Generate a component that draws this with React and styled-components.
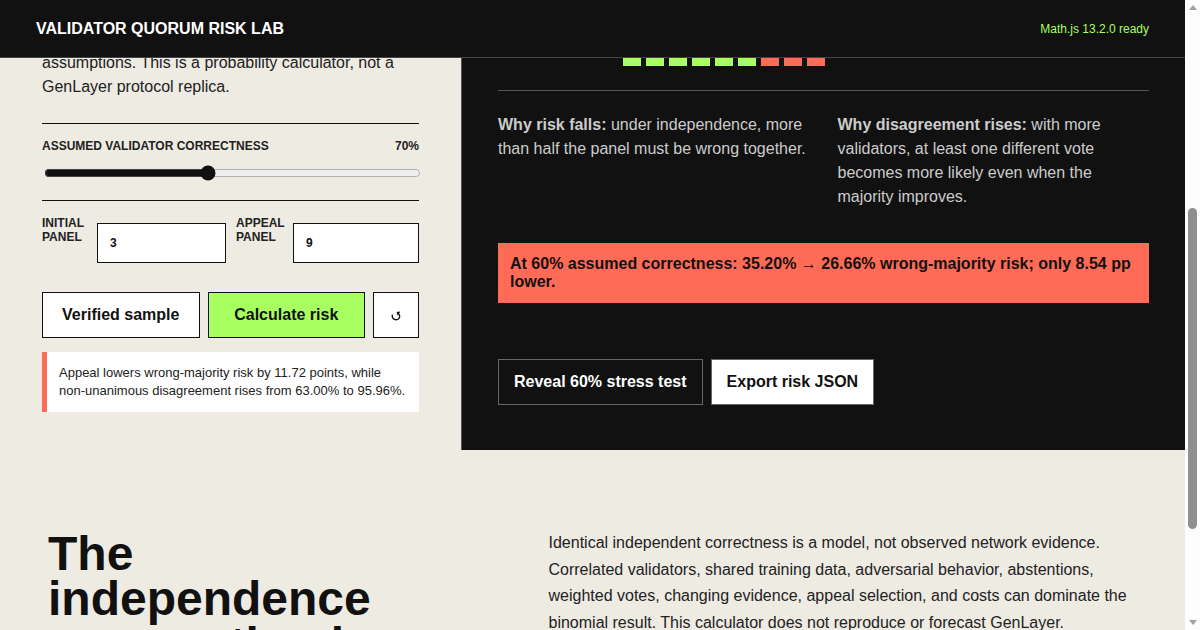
import React, { useLayoutEffect, useRef } from 'react'
import styled, { createGlobalStyle } from 'styled-components'

const GlobalStyle = createGlobalStyle`
  * { box-sizing: border-box; }
  body {
    margin: 0;
    background: #eeebe3;
    color: #111;
    font-family: "Liberation Sans", Arial, sans-serif;
    font-size: 16px;
  }
`

const votes = [1, 1, 1, 1, 1, 1, 0, 0, 0]

const App = () => {
  const scroller = useRef(null)

  // the top of the page slides a few pixels under the header
  useLayoutEffect(() => {
    scroller.current.scrollTop = 8
  }, [])

  return (
    <Frame>
      <GlobalStyle />
      <Page>
        <Header>
          <Brand>VALIDATOR QUORUM RISK LAB</Brand>
          <Status>Math.js 13.2.0 ready</Status>
        </Header>

        <Scroller ref={scroller}>
          <Lab>
            <Controls>
              <Lede>
                assumptions. This is a probability calculator, not a GenLayer protocol replica.
              </Lede>

              <SliderGroup>
                <SliderHead>
                  <span>ASSUMED VALIDATOR CORRECTNESS</span>
                  <span>70%</span>
                </SliderHead>
                <Slider type="range" min="51" max="95" defaultValue="70" />
              </SliderGroup>

              <Fields>
                <Field>
                  <FieldLabel $width={43}>INITIAL PANEL</FieldLabel>
                  <NumberInput type="number" defaultValue="3" />
                </Field>
                <Field>
                  <FieldLabel $width={45}>APPEAL PANEL</FieldLabel>
                  <NumberInput type="number" defaultValue="9" />
                </Field>
              </Fields>

              <Actions>
                <Button>Verified sample</Button>
                <Button $accent>Calculate risk</Button>
                <ResetButton aria-label="Reset">
                  <svg width="10" height="10" viewBox="0 0 10 10" fill="none" stroke="#111" strokeWidth="1.4">
                    <path d="M1.4 3.6C0.6 6.8 2.6 8.8 5 8.8C7.4 8.8 9 7 8.6 4.6C8.4 3.6 7.9 2.9 7.2 2.3" />
                    <path d="M8.8 1.2L6.4 1.6L7 4.2" strokeWidth="1.2" />
                  </svg>
                </ResetButton>
              </Actions>

              <Note>
                Appeal lowers wrong-majority risk by 11.72 points, while non-unanimous disagreement rises
                from 63.00% to 95.96%.
              </Note>
            </Controls>

            <Results>
              <Votes>
                {votes.map((ok, i) => (
                  <Vote key={i} $ok={ok} />
                ))}
              </Votes>

              <Explain>
                <p>
                  <strong>Why risk falls:</strong> under independence, more than half the panel must be wrong together.
                </p>
                <p>
                  <strong>Why disagreement rises:</strong> with more validators, at least one different vote becomes more
                  likely even when the majority improves.
                </p>
              </Explain>

              <Alert>At 60% assumed correctness: 35.20% → 26.66% wrong-majority risk; only 8.54 pp lower.</Alert>

              <ResultActions>
                <DarkButton>Reveal 60% stress test</DarkButton>
                <LightButton>Export risk JSON</LightButton>
              </ResultActions>
            </Results>
          </Lab>

          <Caveat>
            <CaveatTitle>The independence assumption is the limit</CaveatTitle>
            <CaveatText>
              Identical independent correctness is a model, not observed network evidence. Correlated validators,
              shared training data, adversarial behavior, abstentions, weighted votes, changing evidence, appeal
              selection, and costs can dominate the binomial result. This calculator does not reproduce or forecast
              GenLayer.
            </CaveatText>
          </Caveat>
        </Scroller>
      </Page>

      <ScrollTrack>
        <ArrowUp />
        <Thumb />
        <ArrowDown />
      </ScrollTrack>
    </Frame>
  )
}

const Frame = styled.div`
  display: flex;
  height: 100vh;
  overflow: hidden;
`

const Page = styled.div`
  flex: 1;
  min-width: 0;
  display: flex;
  flex-direction: column;
`

const Header = styled.header`
  flex: none;
  height: 58px;
  padding: 0 36px;
  display: flex;
  align-items: center;
  justify-content: space-between;
  background: #111;
  border-bottom: 1px solid #444;
`

const Brand = styled.div`
  color: #fff;
  font-size: 16px;
  font-weight: 700;
`

const Status = styled.div`
  color: #a8ff60;
  font-size: 12px;
`

const Scroller = styled.div`
  flex: 1;
  min-height: 0;
  overflow: hidden;
`

const ScrollTrack = styled.aside`
  flex: none;
  width: 15px;
  display: flex;
  flex-direction: column;
  align-items: center;
  background: #fdfdfd;
`

const ArrowUp = styled.span`
  margin-top: 5px;
  border-left: 4.5px solid transparent;
  border-right: 4.5px solid transparent;
  border-bottom: 5px solid #a0a0a0;
`

const Thumb = styled.span`
  width: 9px;
  height: 321px;
  margin-top: 198px;
  border-radius: 5px;
  background: #8f8f8f;
`

const ArrowDown = styled.span`
  margin-top: auto;
  margin-bottom: 5px;
  border-left: 4.5px solid transparent;
  border-right: 4.5px solid transparent;
  border-top: 5px solid #a0a0a0;
`

const Lab = styled.main`
  display: grid;
  grid-template-columns: 461px 1fr;
  height: 400px;
`

const Controls = styled.section`
  padding: 0 42px;
`

const Lede = styled.p`
  margin: 0 0 24px;
  padding-top: 1px;
  line-height: 24px;
  color: #222;
`

const SliderGroup = styled.div`
  border-top: 1px solid #111;
  border-bottom: 1px solid #111;
  padding: 15px 0 17px;
`

const SliderHead = styled.div`
  display: flex;
  justify-content: space-between;
  font-size: 12px;
  font-weight: 700;
  line-height: 14px;
  color: #222;
  margin-bottom: 12px;
`

const Slider = styled.input`
  display: block;
  width: 100%;
  height: 16px;
  margin: 2px;
  accent-color: #111;
`

const Fields = styled.div`
  display: grid;
  grid-template-columns: 184px 183px;
  gap: 10px;
  padding-top: 15px;
`

const Field = styled.label`
  display: grid;
  grid-template-columns: auto 1fr;
  gap: 12px;
  align-items: start;
`

const FieldLabel = styled.span`
  width: ${p => p.$width}px;
  font-size: 12px;
  font-weight: 700;
  line-height: 14px;
  color: #222;
`

const NumberInput = styled.input`
  width: 100%;
  min-width: 0;
  height: 40px;
  margin-top: 7px;
  padding: 0 12px;
  border: 1px solid #111;
  border-radius: 0;
  background: #fff;
  color: #111;
  font-family: inherit;
  font-size: 12px;
  font-weight: 700;
`

const Actions = styled.div`
  display: grid;
  grid-template-columns: 1fr 1fr 46px;
  gap: 8px;
  margin-top: 29px;
`

const Button = styled.button`
  height: 46px;
  padding: 0;
  border: 1px solid #111;
  border-radius: 0;
  background: ${p => (p.$accent ? '#a8ff60' : '#fff')};
  color: #111;
  font-family: inherit;
  font-size: 16px;
  font-weight: 700;
`

const ResetButton = styled(Button)`
  display: flex;
  align-items: center;
  justify-content: center;
  padding-top: 2px;
`

const Note = styled.p`
  margin: 14px 0 0;
  padding: 12px;
  border-left: 5px solid #ff6b57;
  background: #fff;
  color: #222;
  font-size: 13px;
  line-height: 18px;
`

const Results = styled.section`
  padding: 4px 36px 0;
  background: #111;
  border-left: 1px solid #555;
  color: #fff;
`

const Votes = styled.div`
  display: flex;
  gap: 5px;
  padding: 0 0 24px 125px;
  border-bottom: 1px solid #555;
`

const Vote = styled.span`
  width: 18px;
  height: 12px;
  background: ${p => (p.$ok ? '#a8ff60' : '#ff6b57')};
`

const Explain = styled.div`
  display: grid;
  grid-template-columns: 1fr 1fr;
  gap: 28px;
  padding-top: 22px;
  color: #ccc;
  line-height: 24px;

  & p {
    margin: 0;
  }
`

const Alert = styled.div`
  margin-top: 34px;
  padding: 12px;
  background: #ff6b57;
  color: #111;
  font-weight: 700;
  line-height: 18px;
`

const ResultActions = styled.div`
  display: flex;
  gap: 8px;
  margin-top: 56px;
`

const DarkButton = styled.button`
  height: 46px;
  padding: 0 15px;
  border: 1px solid #666;
  border-radius: 0;
  background: #111;
  color: #fff;
  font-family: inherit;
  font-size: 16px;
  font-weight: 700;
`

const LightButton = styled(DarkButton)`
  background: #fff;
  color: #111;
`

const Caveat = styled.section`
  display: grid;
  grid-template-columns: 400.5px 1fr;
  gap: 100px;
  padding: 80.3px 48px 60px;
`

const CaveatTitle = styled.h2`
  margin: 0.5px 0 0;
  font-size: 48px;
  line-height: 45.6px;
  color: #111;
`

const CaveatText = styled.p`
  margin: 0;
  line-height: 26.4px;
  color: #222;
`

export default App
